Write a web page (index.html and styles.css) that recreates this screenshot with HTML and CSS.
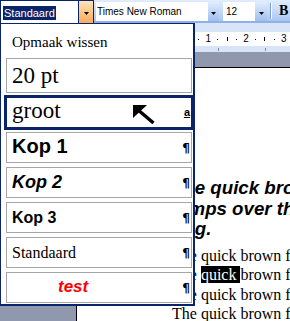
FILE: index.html
```html
<!DOCTYPE html>
<html lang="nl">
<head>
  <meta charset="UTF-8" />
  <title>Stijl kiezen</title>
  <link rel="stylesheet" href="styles.css">
</head>
<body>

  <div class="toolbar">
    <div class="combo combo-style">
      <div class="combo-field"><span class="sel">Standaard</span></div>
      <div class="combo-btn hot"><svg width="5" height="3" viewBox="0 0 5 3"><polygon points="0,0 5,0 2.5,3" fill="#000"/></svg></div>
    </div>
    <div class="combo combo-font">
      <div class="combo-field">Times New Roman</div>
      <div class="combo-btn"><svg width="5" height="3" viewBox="0 0 5 3"><polygon points="0,0 5,0 2.5,3" fill="#000"/></svg></div>
    </div>
    <div class="combo combo-size">
      <div class="combo-field">12</div>
      <div class="combo-btn"><svg width="5" height="3" viewBox="0 0 5 3"><polygon points="0,0 5,0 2.5,3" fill="#000"/></svg></div>
    </div>
    <span class="sep"></span>
    <span class="tb-bold">B</span>
  </div>

  <div class="ruler-bar">
    <div class="ruler">
      <span class="r-cell"></span>
      <span class="r-cell"><i class="r-dot"></i></span>
      <span class="r-cell"><i class="r-tick"></i></span>
      <span class="r-cell"><i class="r-dot"></i></span>
      <span class="r-cell r-num">1</span>
      <span class="r-cell"><i class="r-dot"></i></span>
      <span class="r-cell"><i class="r-tick"></i></span>
      <span class="r-cell"><i class="r-dot"></i></span>
      <span class="r-cell r-num">2</span>
      <span class="r-cell"><i class="r-dot"></i></span>
      <span class="r-cell"><i class="r-tick"></i></span>
      <span class="r-cell"><i class="r-dot"></i></span>
      <span class="r-cell r-num">3</span>
      <span class="r-cell"><i class="r-dot"></i></span>
    </div>
    <div class="tabs">
      <i class="tab-stop"></i>
      <i class="tab-stop"></i>
    </div>
  </div>

  <div class="page">
    <h2 class="doc-head">The quick brown fox<br>jumps over the lazy<br>dog.</h2>
    <p class="doc-text">
      The quick brown fox jumps over the lazy dog.<br>
      The <span class="hl">quick </span>brown fox jumps over the lazy dog.<br>
      The quick brown fox jumps over the lazy dog.<br>
      The quick brown fox jumps over the lazy dog.
    </p>
  </div>

  <!-- dropdown of the style box -->
  <div class="style-menu">
    <div class="item item-clear"><span class="lbl lbl-clear">Opmaak wissen</span></div>
    <div class="item item-big"><span class="lbl lbl-big">20 pt</span></div>
    <div class="item item-hover">
      <span class="lbl lbl-groot">groot</span>
      <span class="mark mark-char">a</span>
      <svg class="pointer" width="24" height="22" viewBox="0 0 24 22">
        <polygon points="2,2 16,2 2,15" fill="#000"/>
        <line x1="6" y1="6" x2="22.5" y2="20" stroke="#000" stroke-width="3.5"/>
      </svg>
    </div>
    <div class="item"><span class="lbl lbl-kop1">Kop 1</span><span class="mark">¶</span></div>
    <div class="item"><span class="lbl lbl-kop2">Kop 2</span><span class="mark">¶</span></div>
    <div class="item"><span class="lbl lbl-kop3">Kop 3</span><span class="mark">¶</span></div>
    <div class="item"><span class="lbl lbl-std">Standaard</span><span class="mark">¶</span></div>
    <div class="item"><span class="lbl lbl-test">test</span><span class="mark">¶</span></div>
  </div>

</body>
</html>
```

FILE: styles.css
```css
* { box-sizing: border-box; margin: 0; padding: 0; }
body {
  width: 290px;
  height: 321px;
  overflow: hidden;
  position: relative;
  background: #8f98ac;
  font-family: "Liberation Sans", Arial, sans-serif;
}

/* toolbar */
.toolbar {
  display: flex;
  align-items: flex-start;
  height: 23px;
  border-bottom: 2px solid #8fb0e6;
  background: linear-gradient(#e1edfd, #c5dbf8 50%, #aac6f1);
  font-size: 10px;
  white-space: nowrap;
}

.combo {
  display: flex;
  background: #fff;
}

.combo-field {
  line-height: 19px;
  color: #000;
}

.combo-btn {
  display: flex;
  justify-content: center;
  padding-top: 10px;
  background: linear-gradient(#e3eefd, #b8d0f5 60%, #a2bfee);
}

.combo-btn svg { display: block; }

.combo-style {
  width: 94px;
  height: 23px;
  border: 1px solid #0a246a;
  border-bottom: 0;
}

.combo-style .combo-field {
  width: 77px;
  padding: 3px 0 0 2px;
}

.sel {
  display: inline-block;
  background: #0a246a;
  color: #fff;
  font-size: 11px;
  line-height: 13px;
  padding: 1px 1px 0;
}

.combo-style .combo-btn {
  width: 15px;
  border-left: 1px solid #0a246a;
  padding-top: 11px;
  background: linear-gradient(#ffe3bb, #fcc484 55%, #f9ab5c);
}

.combo-font {
  margin: 2px 0 0 2px;
  width: 123px;
  height: 19px;
}

.combo-font .combo-field { width: 112px; padding-left: 1px; }
.combo-font .combo-btn { width: 11px; }

.combo-size {
  margin: 2px 0 0 4px;
  width: 44px;
  height: 19px;
}

.combo-size .combo-field { width: 32px; padding-left: 3px; }
.combo-size .combo-btn { width: 12px; }

.sep {
  margin: 3px 0 0 3px;
  width: 2px;
  height: 16px;
  border-left: 1px solid #7a9bd5;
  border-right: 1px solid #fff;
}

.tb-bold {
  margin-left: 7px;
  font-family: "Liberation Serif", serif;
  font-weight: bold;
  font-size: 14px;
  line-height: 21px;
}

/* ruler */
.ruler-bar {
  height: 29px;
  padding-top: 9px;
  background: #d8e5f8;
}

.ruler {
  display: flex;
  align-items: center;
  height: 14px;
  padding-left: 165.8px;
  background: #fff;
}

.r-cell {
  flex: 0 0 9.45px;
  display: flex;
  justify-content: center;
  align-items: center;
}

.r-dot { width: 1px; height: 1px; background: #000; }
.r-tick { width: 1px; height: 4px; background: #000; }

.r-num {
  font-size: 10px;
  line-height: 10px;
  color: #000;
}

.tabs {
  display: flex;
  gap: 46px;
  padding: 2px 0 0 218px;
  height: 6px;
}

.tab-stop { width: 1px; height: 3px; background: #7d8aa3; }

/* document page */
.page {
  margin: 15px 0 0 76px;
  min-height: 300px;
  padding: 110px 0 0 95px;
  border-left: 1px solid #000;
  border-top: 1px solid #000;
  background: #fff;
  white-space: nowrap;
  color: #000;
}

.doc-head {
  font-size: 18.67px;
  font-style: italic;
  font-weight: bold;
  line-height: 20.5px;
}

.doc-text {
  margin-top: 6.5px;
  font-family: "Liberation Serif", "Times New Roman", serif;
  font-size: 16px;
  line-height: 19.33px;
}

.hl { background: #000; color: #fff; }

/* style dropdown */
.style-menu {
  position: absolute;
  top: 23px;
  left: 0;
  width: 195px;
  display: flex;
  flex-direction: column;
  gap: 4px;
  padding: 0 1px 1px 5px;
  border: 1px solid #0a246a;
  border-right-width: 2px;
  border-bottom-width: 2px;
  background: #fff;
  color: #000;
}

.item {
  position: relative;
  display: flex;
  align-items: center;
  height: 31px;
  padding: 0 1px 0 5px;
  border: 1px solid #a6a6a6;
  white-space: nowrap;
}

.item-clear { height: 30px; border-color: transparent; }
.item-big { height: 35px; }

.item-hover {
  border-color: #0a246a;
  box-shadow: 0 0 0 2px #0a246a;
}

.lbl { line-height: 1.2; }

.lbl-clear {
  font: 15px/20px "Liberation Serif", serif;
  margin-top: 6px;
}

.lbl-big { font: 23px/33px "Liberation Serif", serif; }

.lbl-groot {
  font: 23px/25px "Liberation Serif", serif;
  margin-bottom: 4px;
}

.lbl-kop1 { font-size: 20px; font-weight: bold; line-height: 27px; margin-bottom: 2px; }
.lbl-kop2 { font-size: 18px; font-weight: bold; font-style: italic; line-height: 27px; }
.lbl-kop3 { font-size: 16px; font-weight: bold; line-height: 27px; }
.lbl-std { font: 16px/27px "Liberation Serif", serif; }

.lbl-test {
  margin: 0 0 2px 46px;
  font-size: 17px;
  font-weight: bold;
  font-style: italic;
  line-height: 25px;
  color: #ff0000;
}

.mark {
  margin-left: auto;
  font-family: "DejaVu Sans", sans-serif;
  font-size: 12px;
  font-weight: bold;
  line-height: 12px;
}

.mark-char {
  font-family: "Liberation Sans", sans-serif;
  font-size: 11px;
  text-decoration: underline;
  margin-top: -2px;
}

.pointer {
  position: absolute;
  left: 124px;
  top: 5px;
}
```
